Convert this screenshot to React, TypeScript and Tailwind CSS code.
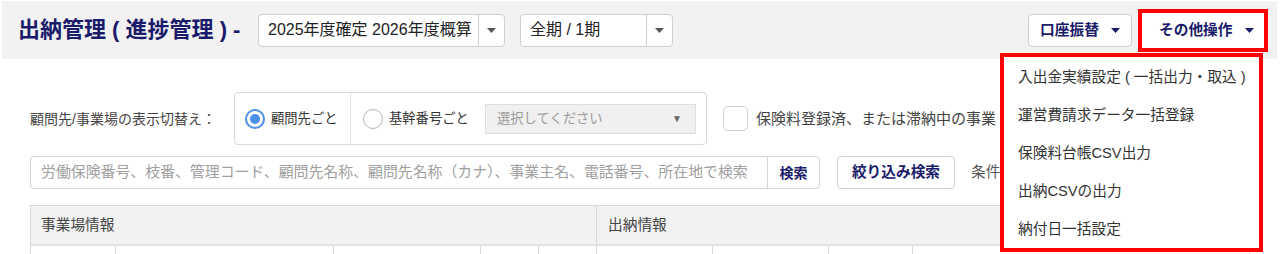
import React from "react";

const FONT = '"Liberation Sans", "Noto Sans CJK JP", sans-serif';

function Caret({ className = "" }: { className?: string }) {
  return (
    <svg width="9" height="5" viewBox="0 0 9 5" className={className}>
      <path d="M0 0 L9 0 L4.5 5 Z" fill="currentColor" />
    </svg>
  );
}

function SplitSelect({ text, width }: { text: string; width: string }) {
  return (
    <div className={`${width} h-[33px] bg-white border border-[#cfcfcf] rounded-[4px] flex items-stretch`}>
      <div className="flex-1 flex items-center pl-[9px] text-[16px] leading-none text-[#222] whitespace-nowrap">{text}</div>
      <div className="w-[26px] border-l border-[#cfcfcf] flex items-center justify-center text-[#555]">
        <Caret />
      </div>
    </div>
  );
}

export default function App() {
  const menu = [
    "入出金実績設定 ( 一括出力・取込 )",
    "運営費請求データ一括登録",
    "保険料台帳CSV出力",
    "出納CSVの出力",
    "納付日一括設定",
  ];
  const lines = [115, 333, 480, 538, 596, 712, 828, 912];
  return (
    <div className="relative w-[1280px] h-[254px] overflow-hidden bg-white" style={{ fontFamily: FONT }}>
      {/* Header */}
      <div className="mt-[1px] ml-[2px] w-[1275px] h-[58px] bg-[#f2f2f2] flex items-center pl-[16px] pr-[9px]">
        <div className="w-[240px] text-[22px] font-bold leading-none text-[#1b1b6b] whitespace-pre">出納管理 ( 進捗管理 ) -</div>
        <SplitSelect text="2025年度確定 2026年度概算" width="w-[247px]" />
        <div className="ml-[15px]">
          <SplitSelect text="全期 / 1期" width="w-[153px]" />
        </div>
        <div className="flex-1" />
        <div className="w-[104px] h-[33px] bg-white border border-[#cfcfcf] rounded-[4px] flex items-center justify-center gap-[12px] text-[#1b1b6b]">
          <span className="text-[14.7px] font-bold leading-none">口座振替</span>
          <Caret />
        </div>
        <div className="ml-[6px] w-[130px] h-[43px] border-[4px] border-[#ff0000] bg-white flex items-center pl-[17px] gap-[13px] text-[#1b1b6b]">
          <span className="text-[14.7px] font-bold leading-none">その他操作</span>
          <Caret />
        </div>
      </div>

      {/* Display switch row */}
      <div className="mt-[33px] pl-[30px] flex items-center">
        <div className="w-[204px] text-[14px] leading-none text-[#444] whitespace-nowrap">顧問先/事業場の表示切替え：</div>
        <div className="w-[473px] h-[53px] border border-[#d9d9d9] rounded-[4px] flex items-stretch">
          <div className="w-[115px] flex items-center pl-[10px] gap-[6px]">
            <span className="w-[20px] h-[20px] rounded-full border-[2px] border-[#4a8fe8] flex items-center justify-center">
              <span className="w-[10px] h-[10px] rounded-full bg-[#4a8fe8]" />
            </span>
            <span className="text-[13.3px] leading-none text-[#333]">顧問先ごと</span>
          </div>
          <div className="flex-1 border-l border-[#e3e3e3] flex items-center pl-[12px] pr-[10px]">
            <span className="w-[20px] h-[20px] rounded-full border-[1.5px] border-[#b5b5b5] bg-white" />
            <span className="ml-[6px] text-[13.3px] leading-none text-[#333] whitespace-nowrap">基幹番号ごと</span>
            <div className="ml-auto w-[211px] h-[30px] bg-[#f0f0f0] border border-[#dedede] flex items-center pl-[11px] pr-[13px]">
              <span className="text-[13.3px] leading-none text-[#9a9a9a]">選択してください</span>
              <span className="ml-auto text-[10px] leading-none text-[#666]">▼</span>
            </div>
          </div>
        </div>
        <div className="ml-[16px] w-[25px] h-[25px] rounded-[5px] border border-[#cfcfcf] bg-white" />
        <div className="ml-[8px] w-[240px] overflow-hidden text-[15px] leading-none text-[#444] whitespace-nowrap">保険料登録済、または滞納中の事業</div>
      </div>

      {/* Search row */}
      <div className="mt-[11px] pl-[30px] flex items-center">
        <div className="w-[790px] h-[33px] border border-[#d4d4d4] rounded-[4px] flex items-stretch bg-white">
          <div className="flex-1 flex items-center pl-[10px] text-[14.9px] leading-none text-[#a0a0a0] whitespace-nowrap overflow-hidden">
            労働保険番号、枝番、管理コード、顧問先名称、顧問先名称（カナ）、事業主名、電話番号、所在地で検索
          </div>
          <div className="w-[52px] border-l border-[#d4d4d4] flex items-center justify-center text-[14px] font-bold leading-none text-[#1b1b6b]">検索</div>
        </div>
        <div className="ml-[17px] w-[118px] h-[33px] border border-[#cfcfcf] rounded-[4px] bg-white flex items-center justify-center text-[14.7px] font-bold leading-none text-[#1b1b6b]">
          絞り込み検索
        </div>
        <div className="ml-[16px] text-[14.7px] leading-none text-[#555] whitespace-nowrap">条件</div>
      </div>

      {/* Table */}
      <div className="mt-[16px] ml-[30px] w-[1220px] border-t border-l border-r border-[#d9d9d9]">
        <div className="h-[40px] bg-[#f2f2f2] flex border-b-[2px] border-[#e2e2e2]">
          <div className="w-[566px] flex items-center pl-[10px] text-[14.7px] leading-none text-[#444] border-r border-[#d9d9d9]">事業場情報</div>
          <div className="flex-1 flex items-center pl-[11px] text-[14.7px] leading-none text-[#444]">出納情報</div>
        </div>
        <div className="relative h-[20px]">
          {lines.map((x) => (
            <div key={x} className="absolute top-0 bottom-0 w-px bg-[#d9d9d9]" style={{ left: x - 31 }} />
          ))}
        </div>
      </div>

      {/* Dropdown menu */}
      <div className="absolute left-[1000px] top-[53px] w-[263px] h-[199px] border-[4px] border-[#ff0000] bg-white flex flex-col pt-[1px]">
        {menu.map((m) => (
          <div key={m} className="h-[38.5px] flex items-center pl-[14px] text-[14.7px] leading-none text-[#333] whitespace-pre">
            {m}
          </div>
        ))}
      </div>
    </div>
  );
}
